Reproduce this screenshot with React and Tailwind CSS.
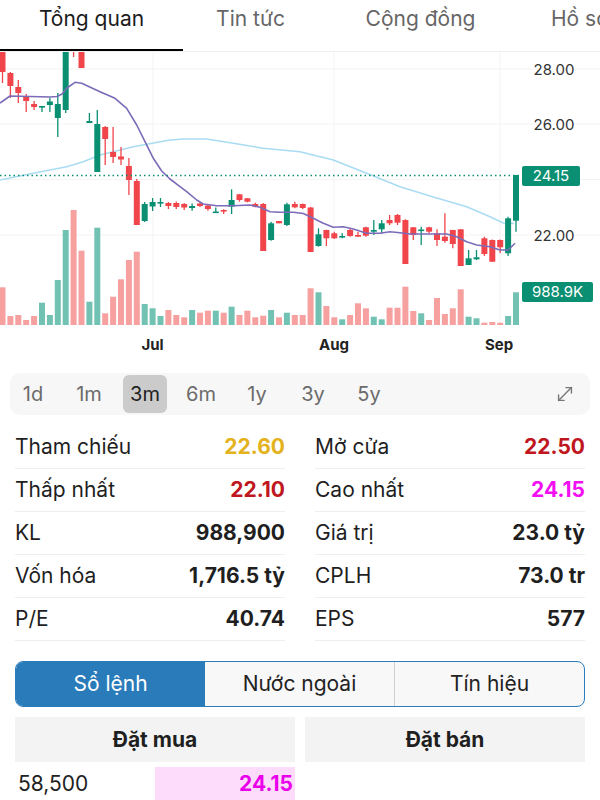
import React from "react";
import { MoveDiagonal } from "lucide-react";

// candle data in chart pixels: [open, close, high, low]
const candles = [
  [45, 72, 40, 83], [73, 86, 72, 98], [87, 93, 80, 103], [97, 101, 94, 112],
  [104, 107, 101, 110], [107.5, 106, 106, 112], [105, 101.5, 98, 112], [118, 104, 93, 137],
  [110, 40, 30, 113], [40, 48, 35, 57], [40, 68, 30, 68], [123, 121, 113, 123],
  [172, 124, 110, 172], [127, 139, 126, 165], [152, 157, 127, 163], [156.5, 159.5, 147, 165],
  [166, 180, 158, 195], [181, 225, 179, 225], [221, 204, 202, 222], [206.5, 202, 198, 211],
  [203.5, 202, 198, 207], [203, 206, 202, 209], [203, 207, 201.5, 209], [204, 207.5, 203, 210],
  [208, 206, 203.5, 210.7], [203.5, 206, 202.7, 207], [205.5, 209, 204, 210.7], [212.7, 211.5, 207.5, 212.7],
  [210, 211.3, 209.3, 214], [206.7, 200, 189.3, 214], [194.3, 200, 194, 201.7], [198.3, 201.7, 198, 202.3],
  [204, 206.7, 202.7, 207.3], [204, 251, 203, 251], [240, 223.3, 221.7, 240.7], [221, 223.3, 221, 223.3],
  [225, 204.3, 202.7, 226], [204, 207.3, 201.7, 208.3], [204, 208, 203.5, 209], [207.5, 252, 207, 252],
  [246, 234.3, 228.3, 246.7], [230, 238.3, 229.7, 246], [233.3, 238.3, 231.7, 239], [237.5, 236, 233.3, 238.3],
  [230, 236, 228.3, 236.7], [235, 236.7, 231.7, 236.7], [227.3, 235.7, 226.7, 236.7], [231.7, 230, 220, 235],
  [229.3, 223.3, 220, 233.3], [220, 223.3, 215, 225], [215, 222.7, 214, 225], [220, 264, 219.3, 264],
  [227.3, 235, 227, 240], [231, 229.5, 226.7, 245], [227.3, 231.7, 226.7, 233.3], [233.3, 240, 229.3, 246],
  [236.7, 241, 213.3, 242.7], [230, 244, 229.7, 248.3], [229.3, 266, 229, 266], [265, 258.3, 250, 265],
  [259.3, 257.3, 250, 260], [238.3, 254, 236.7, 256], [240, 261.7, 239.5, 262], [240, 247.3, 239.5, 253.3],
  [253.3, 218.3, 216.7, 256], [220.7, 175, 175, 231.7],
];

const volumes = [
  287.3, 316, 315, 320, 316, 302.7, 315, 280, 230, 210, 250.7, 301.7, 227.7, 313.3, 296.7, 279.3,
  260, 251.7, 304, 308.3, 316, 310, 315, 317.3, 310, 312.7, 310.7, 310.7, 312.7, 306.7, 315, 310.7,
  317.3, 315.7, 310, 317.3, 312.7, 315, 315, 288.3, 292.3, 306, 317.3, 319.3, 315, 303.3, 308.3, 316.7,
  319.3, 307.7, 307.7, 286.7, 311, 313.3, 320, 298, 314, 308.3, 289.3, 316.7, 318.3, 322.7, 322, 322.7,
  316, 292.3,
];

const maShort = [
  [0, 103], [10, 96], [30, 96.5], [50, 97], [57, 96.5], [62, 94], [67, 88], [75, 82.3], [81.7, 83.3],
  [100, 91.7], [115, 98.3], [126.7, 108.3], [136.7, 125], [145, 141.7], [153.3, 158.3], [161.7, 171],
  [170, 179], [180, 186.7], [186.7, 191.7], [196.7, 200], [203.3, 204], [216.7, 205.7], [233.3, 205.7],
  [250, 205], [260, 207.3], [270, 211.7], [280, 212.3], [293.3, 212.3], [303.3, 213.5], [313.3, 218.3],
  [323.3, 223.3], [333.3, 227.3], [343.3, 226.7], [353.3, 229], [366.7, 233.3], [380, 233.3],
  [390, 231.7], [400, 232.7], [410, 234], [433.3, 234], [446.7, 234], [456.7, 236.7], [466.7, 241.7],
  [476.7, 245], [490, 246.7], [500, 250], [508.3, 250], [515, 243.3],
];

const maLong = [
  [0, 180], [33.3, 173.3], [66.7, 166.7], [83.3, 161.7], [100, 155], [133.3, 146.7], [170, 140],
  [183.3, 139], [206.7, 139], [233.3, 143.3], [263.3, 148.3], [300, 151.7], [333.3, 160],
  [366.7, 173.3], [400, 186.7], [433.3, 197], [466.7, 206.7], [490, 216.7], [503.3, 223], [514, 223.5],
];

const UP = "#0b8f72";
const DOWN = "#f0454b";

const PriceChart = () => {
  const pts = (arr) => arr.map(([x, y]) => `${x},${y}`).join(" ");
  return (
    <svg width="600" height="303" viewBox="0 52 600 303" className="block">
      {/* grid */}
      {[69, 124, 179.5, 235].map((y) => (
        <line key={y} x1="0" x2="600" y1={y} y2={y} stroke="#f3f3f3" strokeWidth="1" />
      ))}
      {[153, 334, 500].map((x) => (
        <line key={x} x1={x} x2={x} y1="52" y2="328" stroke="#f3f3f3" strokeWidth="1" />
      ))}

      {/* volume */}
      {volumes.map((v, i) => {
        const [o, c] = candles[i];
        const x = 2.5 + i * 7.9;
        return (
          <rect key={i} x={x - 3} y={v} width="6" height={325 - v} fill={c < o ? "#72c2b4" : "#f7a0a0"} />
        );
      })}

      {/* moving averages */}
      <polyline points={pts(maLong)} fill="none" stroke="#a9dcf3" strokeWidth="1.5" strokeLinejoin="round" />

      {/* candles */}
      {candles.map(([o, c, h, l], i) => {
        const x = 2.5 + i * 7.9;
        const col = c < o ? UP : DOWN;
        const top = Math.min(o, c);
        const hgt = Math.max(Math.abs(c - o), 1.6);
        return (
          <g key={i}>
            <line x1={x} x2={x} y1={h} y2={l} stroke={col} strokeWidth="1.3" />
            <rect x={x - 3} y={top} width="6" height={hgt} fill={col} />
          </g>
        );
      })}

      <polyline points={pts(maShort)} fill="none" stroke="#7b6bb8" strokeWidth="1.6" strokeLinejoin="round" />

      {/* last price line */}
      <line x1="0" x2="520" y1="175.5" y2="175.5" stroke="#0b8f72" strokeWidth="1.6" strokeDasharray="1.5 3" />

      {/* price axis */}
      {[
        ["28.00", 69],
        ["26.00", 124],
        ["22.00", 235],
      ].map(([t, y]) => (
        <text key={t} x="554" y={y + 5.5} textAnchor="middle" fontSize="15" fill="#333" fontFamily="Inter, sans-serif">
          {t}
        </text>
      ))}
      <rect x="522" y="166" width="58" height="20" rx="2" fill="#0b8f72" />
      <text x="551" y="181" textAnchor="middle" fontSize="15" fill="#fff" fontFamily="Inter, sans-serif">24.15</text>
      <rect x="522" y="282" width="71" height="20" rx="2" fill="#0b8f72" />
      <text x="557.5" y="297" textAnchor="middle" fontSize="15" fill="#fff" fontFamily="Inter, sans-serif">988.9K</text>

      {/* date axis */}
      {[
        ["Jul", 152.5],
        ["Aug", 334],
        ["Sep", 499],
      ].map(([t, x]) => (
        <text key={t} x={x} y="350" textAnchor="middle" fontSize="15" fontWeight="700" fill="#222" fontFamily="Inter, sans-serif">
          {t}
        </text>
      ))}
    </svg>
  );
};

const stats = [
  ["Tham chiếu", "22.60", "text-[#e3b21d]", "Mở cửa", "22.50", "text-[#c01620]"],
  ["Thấp nhất", "22.10", "text-[#c01620]", "Cao nhất", "24.15", "text-[#f20ff2]"],
  ["KL", "988,900", "text-[#1f1f1f]", "Giá trị", "23.0 tỷ", "text-[#1f1f1f]"],
  ["Vốn hóa", "1,716.5 tỷ", "text-[#1f1f1f]", "CPLH", "73.0 tr", "text-[#1f1f1f]"],
  ["P/E", "40.74", "text-[#1f1f1f]", "EPS", "577", "text-[#1f1f1f]"],
];

const periods = ["1d", "1m", "3m", "6m", "1y", "3y", "5y"];

export default function App() {
  return (
    <div className="w-[600px] h-[800px] overflow-hidden bg-white font-['Inter','Noto_Sans',sans-serif] text-[#1f1f1f]">
      {/* top tabs */}
      <div className="flex h-[52px] border-b border-[#efefef] text-[21px] leading-[28px] whitespace-nowrap">
        <div className="w-[183px] shrink-0 flex justify-center pt-[5px] border-b-2 border-black text-[#1c1c1c]">Tổng quan</div>
        <div className="w-[135px] shrink-0 flex justify-center pt-[5px] text-[#666]">Tin tức</div>
        <div className="w-[205px] shrink-0 flex justify-center pt-[5px] text-[#666]">Cộng đồng</div>
        <div className="shrink-0 pl-[28px] pt-[5px] text-[#666]">Hồ sơ</div>
      </div>

      <PriceChart />

      {/* period selector */}
      <div className="mt-[18px] mx-[10px] h-[42px] rounded-[10px] bg-[#f7f7f7] flex items-center pl-[1px] pr-[14px]">
        {periods.map((p, i) => (
          <div
            key={p}
            className={
              i === 2
                ? "w-[44px] h-[38px] mr-[12px] rounded-[6px] bg-[#cbcbcb] flex items-center justify-center text-[20px] text-[#222]"
                : "w-[44px] h-[38px] mr-[12px] flex items-center justify-center text-[20px] text-[#6b6b6b]"
            }
          >
            {p}
          </div>
        ))}
        <div className="ml-auto text-[#777]">
          <MoveDiagonal size={22} strokeWidth={1.5} />
        </div>
      </div>

      {/* stats */}
      <div className="mt-[11px] px-[15px] grid grid-cols-2 gap-x-[30px] text-[21px]">
        {stats.map((r) => (
          <React.Fragment key={r[0]}>
            <div className="h-[43px] flex items-center justify-between border-b border-[#eeeeee]">
              <span>{r[0]}</span>
              <span className={"font-bold " + r[2]}>{r[1]}</span>
            </div>
            <div className="h-[43px] flex items-center justify-between border-b border-[#eeeeee]">
              <span>{r[3]}</span>
              <span className={"font-bold " + r[5]}>{r[4]}</span>
            </div>
          </React.Fragment>
        ))}
      </div>

      {/* segmented control */}
      <div className="mt-[20px] mx-[15px] h-[46px] rounded-[8px] border border-[#2c7cbb] bg-[#f8f8f8] flex overflow-hidden text-[21px]">
        <div className="flex-1 flex items-center justify-center bg-[#2a7bb9] text-white">Sổ lệnh</div>
        <div className="flex-1 flex items-center justify-center border-r border-[#d0d0d0] text-[#222]">Nước ngoài</div>
        <div className="flex-1 flex items-center justify-center text-[#222]">Tín hiệu</div>
      </div>

      {/* order book */}
      <div className="mt-[10px] px-[15px] grid grid-cols-2 gap-x-[10px] text-[21px]">
        <div className="h-[45px] bg-[#f3f3f3] flex items-center justify-center font-bold">Đặt mua</div>
        <div className="h-[45px] bg-[#f3f3f3] flex items-center justify-center font-bold">Đặt bán</div>
      </div>
      <div className="mt-[5px] px-[15px] grid grid-cols-2 gap-x-[10px] text-[21px]">
        <div className="flex items-center h-[33px]">
          <span className="pl-[3px] text-[#222]">58,500</span>
          <div className="ml-auto w-[140px] h-[33px] bg-[#fddcfb] flex items-center justify-end pr-[2px] font-bold text-[#ea00ea]">
            24.15
          </div>
        </div>
        <div />
      </div>
    </div>
  );
}
